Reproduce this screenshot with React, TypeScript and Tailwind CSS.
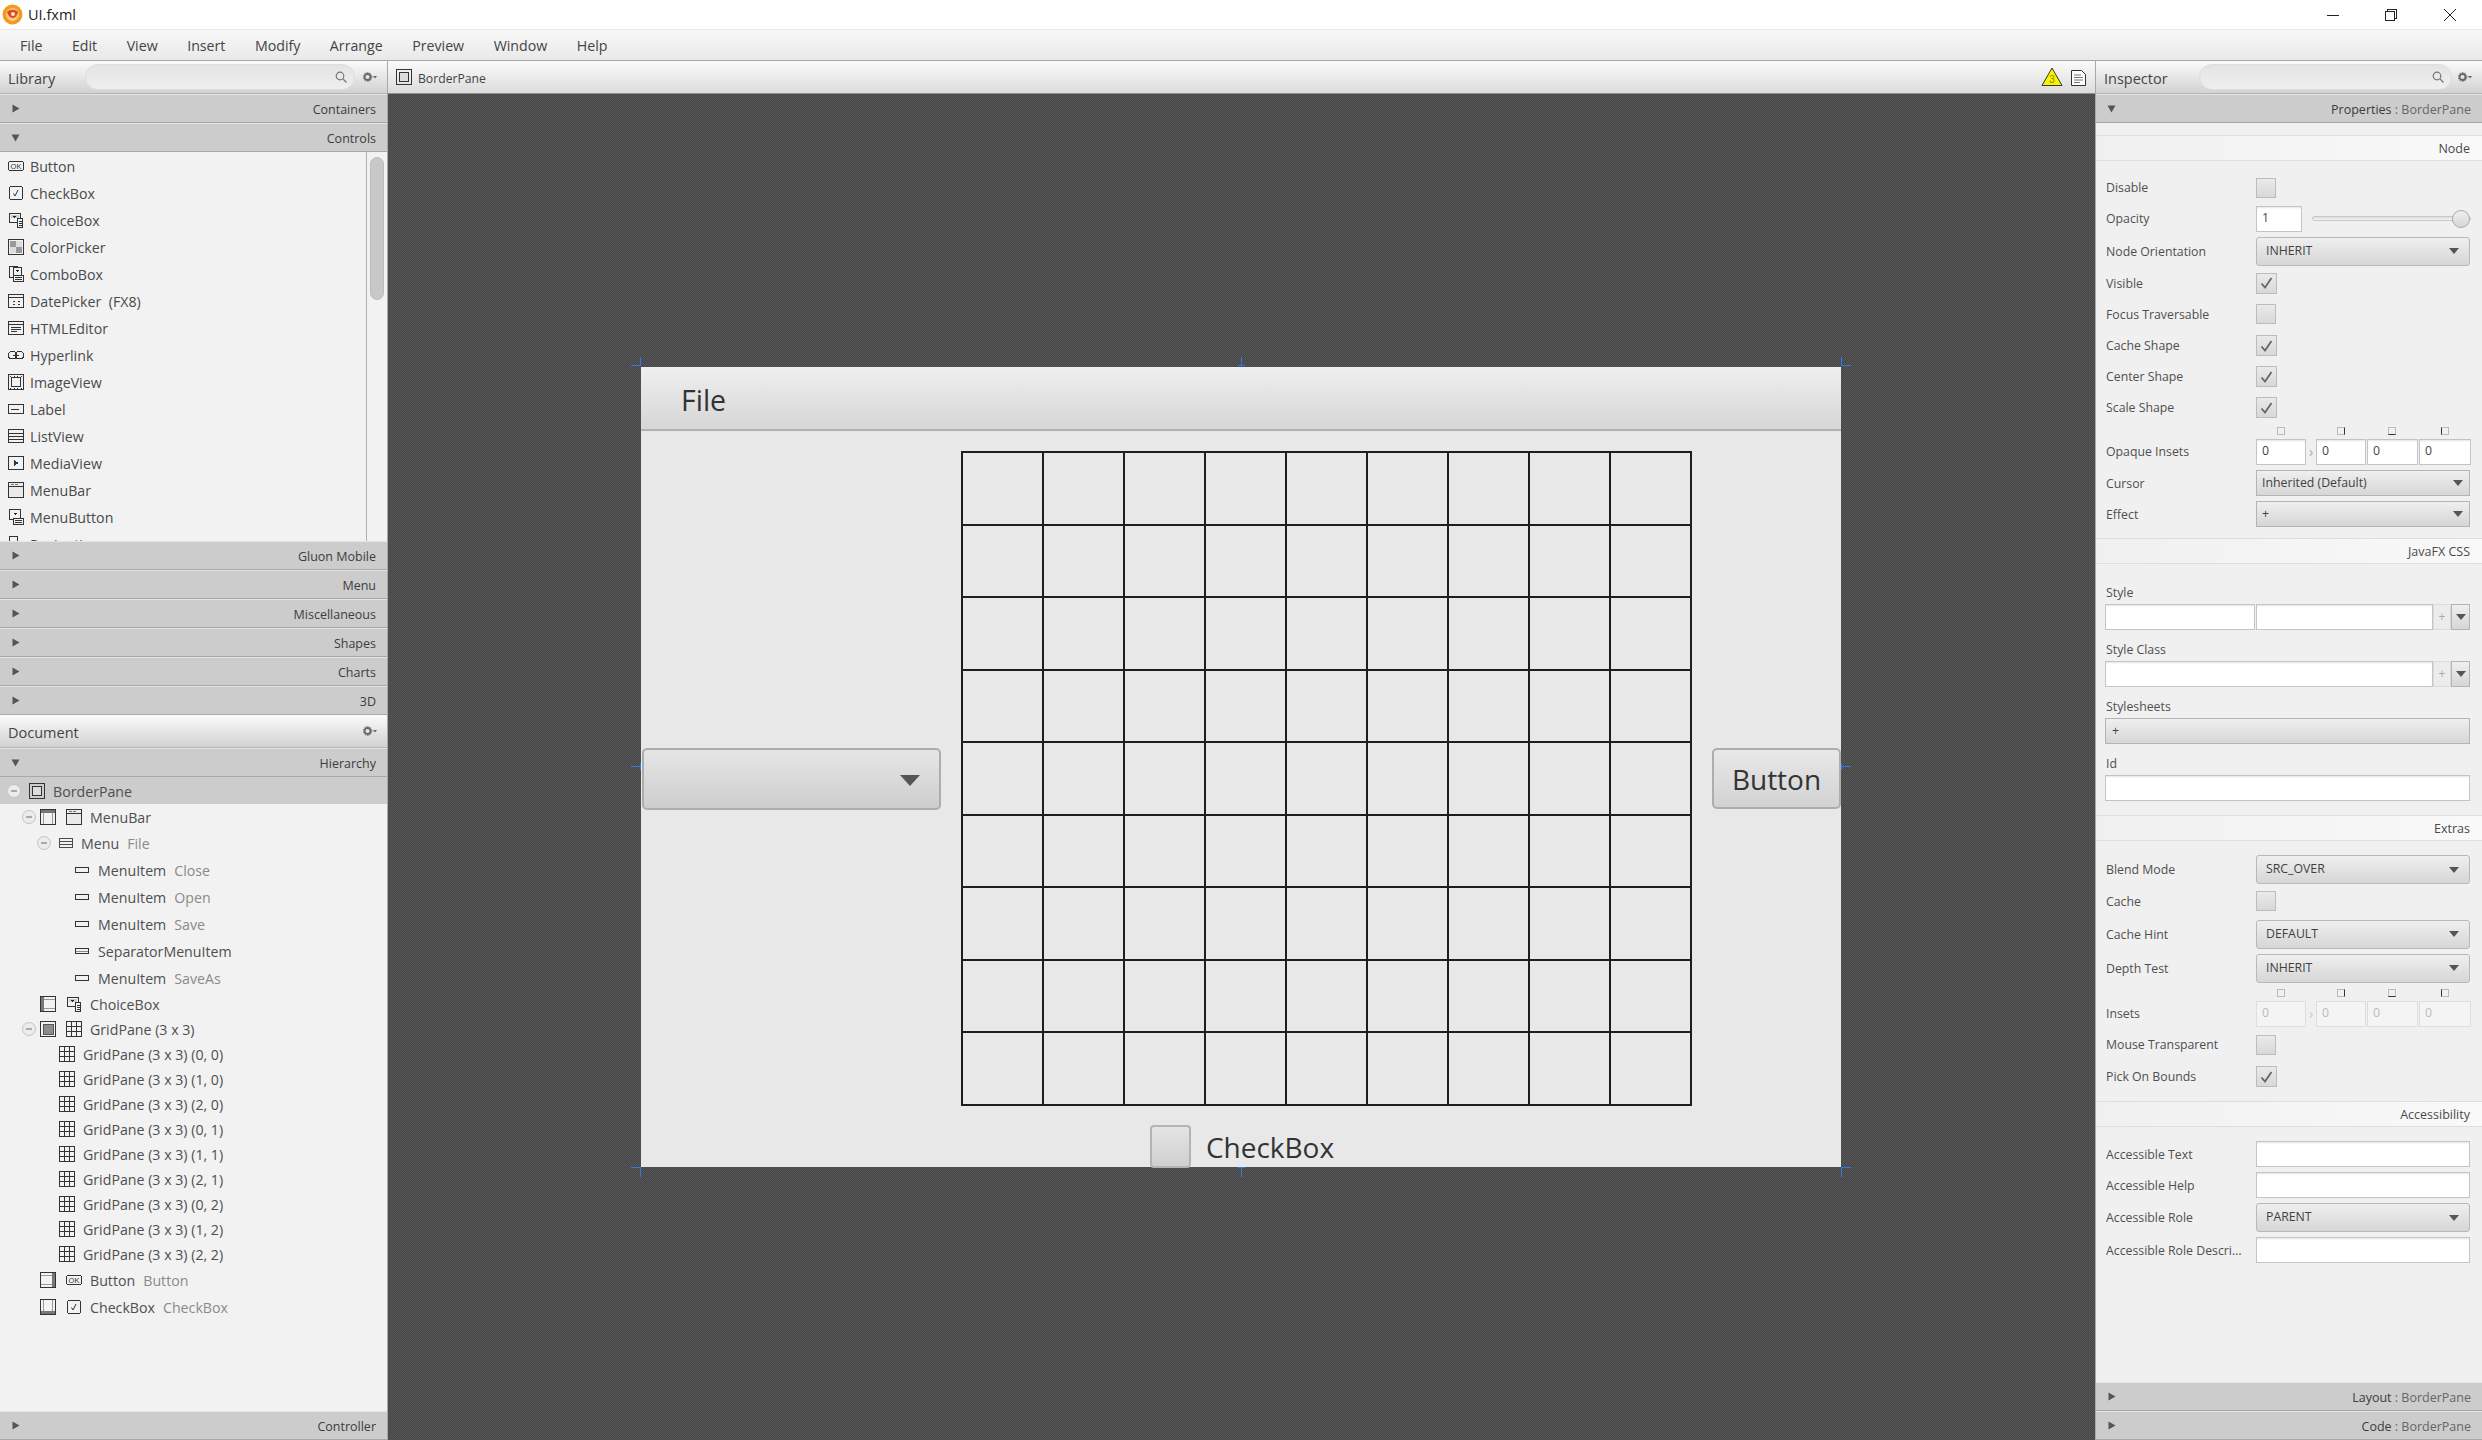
import type { ReactNode } from "react";

const stroke = "#333";

function Svg({ children, size = 16 }: { children: ReactNode; size?: number }) {
  return (
    <svg width={size} height={size} viewBox="0 0 16 16" fill="none" stroke={stroke} strokeWidth="1" shapeRendering="crispEdges" className="shrink-0">
      {children}
    </svg>
  );
}

function Icon({ name }: { name: string }) {
  switch (name) {
    case "button":
      return (
        <Svg>
          <rect x="0.5" y="3.5" width="15" height="9" rx="2" />
          <text x="8" y="11" fontSize="7.5" textAnchor="middle" fill={stroke} stroke="none" fontFamily="Liberation Sans">OK</text>
        </Svg>
      );
    case "check":
      return (
        <Svg>
          <rect x="1.5" y="1.5" width="13" height="13" rx="2" />
          <path d="M5.5 8.5l1.5 2.5 3-6" shapeRendering="auto" />
        </Svg>
      );
    case "choice":
      return (
        <Svg>
          <rect x="1.5" y="1.5" width="11" height="9" fill="#f2f2f2" />
          <rect x="3" y="3" width="8" height="3" fill="#ccc" stroke="none" />
          <path d="M5 4h3l-1.500 2z" fill="#222" stroke="none" />
          <rect x="9.500" y="6.500" width="5" height="9" fill="#f2f2f2" />
          <path d="M10.500 9.500h3M10.500 11.500h3M10.500 13.500h3" />
        </Svg>
      );
    case "color":
      return (
        <Svg>
          <rect x="0.5" y="0.5" width="15" height="15" />
          <rect x="2" y="2" width="6" height="6" fill="#999" stroke="none" />
          <rect x="8" y="2" width="6" height="6" fill="#ddd" stroke="none" />
          <rect x="2" y="8" width="6" height="6" fill="#ddd" stroke="none" />
          <rect x="8" y="8" width="6" height="6" fill="#999" stroke="none" />
        </Svg>
      );
    case "combo":
      return (
        <Svg>
          <rect x="1.500" y="0.500" width="8" height="11" fill="#f2f2f2" />
          <rect x="5.500" y="1.500" width="8" height="8" fill="#f2f2f2" />
          <path d="M8 4h3.500l-1.750 2z" fill="#222" stroke="none" />
          <rect x="5.500" y="9.500" width="10" height="6" fill="#f2f2f2" />
          <path d="M7 11.500h7M7 13.500h7" />
        </Svg>
      );
    case "date":
      return (
        <Svg>
          <rect x="0.500" y="1.500" width="15" height="13" />
          <path d="M1 4.500h14M4.500 8.500h2M9.500 8.500h2M4.500 11.500h2M9.500 11.500h2" />
        </Svg>
      );
    case "html":
      return (
        <Svg>
          <rect x="0.500" y="1.500" width="15" height="13" />
          <path d="M1 4.500h14M3 7.500h10M3 9.500h10M3 11.500h6" />
        </Svg>
      );
    case "link":
      return (
        <Svg>
          <rect x="0.500" y="4.500" width="8" height="7" rx="3" />
          <rect x="7.500" y="4.500" width="8" height="7" rx="3" />
          <path d="M5 8h6" />
        </Svg>
      );
    case "image":
      return (
        <Svg>
          <rect x="0.500" y="0.500" width="15" height="15" />
          <rect x="3.500" y="3.500" width="9" height="9" />
          <path d="M2 2h1M6 2h1M9 2h1M13 2h1M2 14h1M6 14h1M9 14h1M13 14h1" />
        </Svg>
      );
    case "label":
      return (
        <Svg>
          <rect x="0.500" y="3.500" width="15" height="9" />
          <path d="M3 8.500h8" />
        </Svg>
      );
    case "list":
      return (
        <Svg>
          <rect x="0.500" y="1.500" width="15" height="13" />
          <path d="M1 5.500h14M1 8.500h14M1 11.500h14" />
        </Svg>
      );
    case "media":
      return (
        <Svg>
          <rect x="0.500" y="1.500" width="15" height="13" />
          <path d="M6 5l5 3-5 3z" fill="#333" stroke="none" />
        </Svg>
      );
    case "menubar":
      return (
        <Svg>
          <rect x="0.500" y="0.500" width="15" height="15" fill="#eaeaea" />
          <path d="M1 4.500h14" />
          <path d="M2.500 2.500h3M7 2.500h3" stroke="#777" />
        </Svg>
      );
    case "menubutton":
      return (
        <Svg>
          <rect x="1.500" y="0.500" width="11" height="10" rx="1" fill="#f2f2f2" />
          <path d="M5 4h4l-2 2z" fill="#222" stroke="none" />
          <rect x="5.500" y="9.500" width="10" height="6" fill="#f2f2f2" />
          <path d="M7 11.500h7M7 13.500h7" />
        </Svg>
      );
    case "pagination":
      return (
        <Svg>
          <rect x="1.500" y="0.500" width="8" height="10" fill="#f2f2f2" />
          <rect x="5.500" y="5.500" width="9" height="10" fill="#f2f2f2" />
        </Svg>
      );
    case "menu":
      return (
        <Svg size={14}>
          <rect x="0.500" y="2.500" width="15" height="11" />
          <path d="M1 6.500h14M1 9.500h14" />
        </Svg>
      );
    case "menuitem":
      return (
        <Svg>
          <rect x="1.500" y="5.500" width="13" height="5" />
        </Svg>
      );
    case "separator":
      return (
        <Svg>
          <rect x="1.500" y="5.500" width="13" height="5" />
          <path d="M2 8h12" stroke="#888" />
        </Svg>
      );
    case "grid":
      return (
        <Svg>
          <rect x="0.500" y="0.500" width="15" height="15" />
          <path d="M5.500 1v14M10.500 1v14M1 5.500h14M1 10.500h14" />
        </Svg>
      );
    case "pane":
      return (
        <Svg>
          <rect x="0.500" y="0.500" width="15" height="15" />
          <rect x="3.500" y="3.500" width="9" height="9" fill="#ddd" />
        </Svg>
      );
    case "top":
      return (
        <Svg>
          <rect x="0.500" y="0.500" width="15" height="15" />
          <rect x="1" y="1" width="14" height="3" fill="#777" stroke="none" />
          <path d="M3.500 4v11M12.500 4v11" stroke="#999" />
        </Svg>
      );
    case "left":
      return (
        <Svg>
          <rect x="0.500" y="0.500" width="15" height="15" />
          <rect x="1" y="1" width="3" height="14" fill="#777" stroke="none" />
          <path d="M4 3.500h11M4 12.500h11" stroke="#999" />
        </Svg>
      );
    case "center":
      return (
        <Svg>
          <rect x="0.500" y="0.500" width="15" height="15" />
          <rect x="3" y="3" width="10" height="10" fill="#8c8c8c" stroke="#555" />
        </Svg>
      );
    case "right":
      return (
        <Svg>
          <rect x="0.500" y="0.500" width="15" height="15" />
          <rect x="12" y="1" width="3" height="14" fill="#777" stroke="none" />
          <path d="M1 3.500h11M1 12.500h11" stroke="#999" />
        </Svg>
      );
    case "bottom":
      return (
        <Svg>
          <rect x="0.500" y="0.500" width="15" height="15" />
          <rect x="1" y="12" width="14" height="3" fill="#777" stroke="none" />
          <path d="M3.500 1v11M12.500 1v11" stroke="#999" />
        </Svg>
      );
    default:
      return null;
  }
}

function Arrow({ open }: { open?: boolean }) {
  return (
    <svg width="9" height="9" viewBox="0 0 9 9" className="shrink-0" fill="#555">
      {open ? <path d="M0.500 1.500h8l-4 7z" /> : <path d="M1.500 0.500l7 4-7 4z" />}
    </svg>
  );
}

function Bar({ label, sub, open }: { label: string; sub?: string; open?: boolean }) {
  return (
    <div className="h-[29px] shrink-0 flex items-center justify-between pl-[11px] pr-[11px] bg-[#cccccc] border-t border-t-[#e4e4e4] border-b border-b-[#a8a8a8] text-[12.500px] text-[#3c3c3c]">
      <Arrow open={open} />
      <span className="pt-[3px]">
        {label}
        {sub && <span className="text-[#666]"> : {sub}</span>}
      </span>
    </div>
  );
}

function Gear() {
  return (
    <svg width="14" height="10" viewBox="0 0 14 10" className="shrink-0">
      <circle cx="4.500" cy="5" r="3" fill="none" stroke="#666" strokeWidth="1.800" />
      <circle cx="4.500" cy="5" r="4.400" fill="none" stroke="#666" strokeWidth="1" strokeDasharray="1.500 1.300" />
      <path d="M10 4h4l-2 2.500z" fill="#666" />
    </svg>
  );
}

function Search({ className }: { className: string }) {
  return (
    <div className={`h-[26px] rounded-full border border-[#dedede] bg-gradient-to-b from-[#e4e4e4] to-[#efefef] flex items-center justify-end pr-[7px] ${className}`}>
      <svg width="12" height="12" viewBox="0 0 12 12" fill="none" stroke="#777" strokeWidth="1.200">
        <circle cx="5" cy="5" r="3.800" />
        <path d="M8 8l3.500 3.500" />
      </svg>
    </div>
  );
}

function PanelHeader({ title, children }: { title: string; children?: ReactNode }) {
  return (
    <div className="h-[33px] shrink-0 flex items-center pl-[8px] pr-[10px] bg-gradient-to-b from-[#fbfbfb] to-[#d2d2d2] border-b border-b-[#b4b4b4] text-[14.500px] text-[#444]">
      <span className="pt-[3px]">{title}</span>
      {children}
    </div>
  );
}

const libraryItems = [
  ["button", "Button"],
  ["check", "CheckBox"],
  ["choice", "ChoiceBox"],
  ["color", "ColorPicker"],
  ["combo", "ComboBox"],
  ["date", "DatePicker  (FX8)"],
  ["html", "HTMLEditor"],
  ["link", "Hyperlink"],
  ["image", "ImageView"],
  ["label", "Label"],
  ["list", "ListView"],
  ["media", "MediaView"],
  ["menubar", "MenuBar"],
  ["menubutton", "MenuButton"],
  ["pagination", "Pagination"],
];

type TreeRow = {
  h: string;
  pl: string;
  toggle?: boolean;
  pos?: string;
  icon: string;
  label: string;
  value?: string;
  selected?: boolean;
};

const menuItemRow = (value: string): TreeRow => ({ h: "h-[27px]", pl: "pl-[74px]", icon: "menuitem", label: "MenuItem", value });
const gridRow = (cell: string): TreeRow => ({ h: "h-[25px]", pl: "pl-[59px]", icon: "grid", label: `GridPane (3 x 3) (${cell})` });

const treeRows: TreeRow[] = [
  { h: "h-[27px]", pl: "pl-[7px]", toggle: true, icon: "pane", label: "BorderPane", selected: true },
  { h: "h-[25px]", pl: "pl-[22px]", toggle: true, pos: "top", icon: "menubar", label: "MenuBar" },
  { h: "h-[27px]", pl: "pl-[37px]", toggle: true, icon: "menu", label: "Menu", value: "File" },
  menuItemRow("Close"),
  menuItemRow("Open"),
  menuItemRow("Save"),
  { h: "h-[27px]", pl: "pl-[74px]", icon: "separator", label: "SeparatorMenuItem" },
  menuItemRow("SaveAs"),
  { h: "h-[25px]", pl: "pl-[40px]", pos: "left", icon: "choice", label: "ChoiceBox" },
  { h: "h-[25px]", pl: "pl-[22px]", toggle: true, pos: "center", icon: "grid", label: "GridPane (3 x 3)" },
  gridRow("0, 0"),
  gridRow("1, 0"),
  gridRow("2, 0"),
  gridRow("0, 1"),
  gridRow("1, 1"),
  gridRow("2, 1"),
  gridRow("0, 2"),
  gridRow("1, 2"),
  gridRow("2, 2"),
  { h: "h-[27px]", pl: "pl-[40px]", pos: "right", icon: "button", label: "Button", value: "Button" },
  { h: "h-[27px]", pl: "pl-[40px]", pos: "bottom", icon: "check", label: "CheckBox", value: "CheckBox" },
];

function Toggle() {
  return (
    <span className="w-[14px] h-[14px] rounded-full border border-[#c4c4c4] bg-[#ececec] flex items-center justify-center shrink-0">
      <span className="w-[6px] h-[2px] bg-[#aaa]" />
    </span>
  );
}

function LeftPanel() {
  return (
    <div className="w-[387px] shrink-0 flex flex-col bg-[#f2f2f2]">
      <PanelHeader title="Library">
        <Search className="w-[270px] ml-[30px]" />
        <span className="ml-auto">
          <Gear />
        </span>
      </PanelHeader>
      <Bar label="Containers" />
      <Bar label="Controls" open />
      <div className="h-[389px] shrink-0 relative overflow-hidden border-r-0">
        <div className="w-[367px] h-full border-r border-r-[#b0b0b0] overflow-hidden">
          {libraryItems.map(([icon, label]) => (
            <div key={label} className="h-[27px] pl-[8px] flex items-center gap-[6px] text-[14.200px] text-[#4a4a4a] whitespace-pre">
              <Icon name={icon} />
              <span className="pt-[2px]">{label}</span>
            </div>
          ))}
        </div>
        <div className="absolute left-[370px] top-[5px] w-[14px] h-[143px] rounded-full bg-[#c8c8c8] border border-[#bdbdbd]" />
      </div>
      <Bar label="Gluon Mobile" />
      <Bar label="Menu" />
      <Bar label="Miscellaneous" />
      <Bar label="Shapes" />
      <Bar label="Charts" />
      <Bar label="3D" />
      <PanelHeader title="Document">
        <span className="ml-auto">
          <Gear />
        </span>
      </PanelHeader>
      <Bar label="Hierarchy" open />
      <div className="flex-1 overflow-hidden">
        {treeRows.map((row, i) => (
          <div key={i} className={`${row.h} ${row.pl} flex items-center text-[14.200px] text-[#4f4f4f] whitespace-pre ${row.selected ? "bg-[#cccccc]" : ""}`}>
            {row.toggle && <span className={row.pos ? "mr-[4px]" : "mr-[8px]"}><Toggle /></span>}
            {row.pos && (
              <span className="mr-[10px]">
                <Icon name={row.pos} />
              </span>
            )}
            <span className="mr-[8px]">
              <Icon name={row.icon} />
            </span>
            <span className="pt-[3px]">{row.label}</span>
            {row.value && <span className="pt-[3px] ml-[8px] text-[#8a8a8a]">{row.value}</span>}
          </div>
        ))}
      </div>
      <Bar label="Controller" />
    </div>
  );
}

function Handles() {
  return (
    <svg width="1224" height="824" viewBox="-12 -12 1224 824" fill="none" stroke="#2f78e8" strokeWidth="1" shapeRendering="crispEdges" className="absolute -left-[12px] -top-[12px] pointer-events-none">
      <path d="M-10 -1.500H-0.500V-10" />
      <path d="M600.500 -10V-1.500M597 -1.500H604" />
      <path d="M1200.500 -10V-1.500H1210" />
      <path d="M-10 399.500H-0.500M-0.500 396V403" />
      <path d="M1200.500 396V403M1200.500 399.500H1210" />
      <path d="M-10 800.500H-0.500V810" />
      <path d="M600.500 800.500V810M597 800.500H604" />
      <path d="M1200.500 810V800.500H1210" />
    </svg>
  );
}

const gridCells = Array.from({ length: 81 }, (_, i) => i);

function Canvas() {
  return (
    <div className="relative w-[1200px] h-[800px] bg-[#e8e8e8] flex flex-col font-['Open_Sans',sans-serif]">
      <Handles />
      <div className="h-[64px] shrink-0 flex items-center pl-[40px] pt-[5px] bg-gradient-to-b from-[#efefef] to-[#d6d6d6] border-b-2 border-b-[#b0b0b0] text-[28.500px] text-[#333]">
        File
      </div>
      <div className="flex-1 flex items-center gap-[20px] pl-[1px]">
        <div className="w-[299px] h-[62px] rounded-[5px] border-2 border-[#adadad] bg-gradient-to-b from-[#e6e6e6] to-[#cdcdcd] flex items-center justify-end pr-[19px]">
          <svg width="20" height="12" viewBox="0 0 20 12" fill="#555" className="mt-[4px]">
            <path d="M0 0h20L10 11z" />
          </svg>
        </div>
        <div className="w-[731px] h-[655px] grid grid-cols-9 grid-rows-9 gap-[2px] p-[2px] bg-[#1e1e1e]">
          {gridCells.map((c) => (
            <div key={c} className="bg-[#e8e8e8]" />
          ))}
        </div>
        <div className="w-[129px] h-[61px] rounded-[5px] border-2 border-[#adadad] bg-gradient-to-b from-[#e8e8e8] to-[#d2d2d2] flex items-center justify-center text-[28px] text-[#333]">
          Button
        </div>
      </div>
      <div className="h-[41px] shrink-0 flex items-center justify-center gap-[15px] pl-[2px]">
        <div className="w-[41px] h-[43px] rounded-[4px] border-2 border-[#b4b4b4] bg-gradient-to-b from-[#e4e4e4] to-[#d0d0d0]" />
        <span className="text-[28px] text-[#333]">CheckBox</span>
      </div>
    </div>
  );
}

function CenterPanel() {
  return (
    <div className="flex-1 min-w-0 flex flex-col border-l border-l-[#a8a8a8]">
      <div className="h-[33px] shrink-0 flex items-center pl-[8px] pr-[8px] gap-[6px] bg-gradient-to-b from-[#fbfbfb] to-[#dcdcdc] border-b border-b-[#8e8e8e] text-[12.200px] text-[#444]">
        <Icon name="pane" />
        <span className="pt-[4px]">BorderPane</span>
        <svg width="22" height="20" viewBox="0 0 22 20" className="ml-auto">
          <path d="M11 1L21 18.500H1z" fill="#f6f600" stroke="#333" strokeWidth="1" />
          <text x="11" y="16" fontSize="10" textAnchor="middle" fill="#a07a00" fontFamily="Liberation Sans">3</text>
        </svg>
        <svg width="15" height="17" viewBox="0 0 15 17" className="ml-[2px] mr-[1px]" fill="none" stroke="#333">
          <path d="M0.500 1.500H10.500L14.500 5.500V16.500H0.500z" fill="#fff" />
          <path d="M3 6h7M3 8.500h9M3 11h9M3 13.500h6" stroke="#777" />
        </svg>
      </div>
      <div className="flex-1 flex items-center justify-center pr-px bg-[repeating-conic-gradient(#474747_0_25%,#565656_0_50%)] bg-[length:2px_2px]">
        <Canvas />
      </div>
    </div>
  );
}

function Section({ title, className = "" }: { title: string; className?: string }) {
  return (
    <div className={`h-[26px] shrink-0 flex items-center justify-end pr-[12px] border-t border-b border-[#dedede] bg-gradient-to-r from-[#f0f0f0] to-[#f9f9f9] text-[12.500px] text-[#4a4a4a] ${className}`}>
      <span className="pt-[2px]">{title}</span>
    </div>
  );
}

function Check({ checked }: { checked?: boolean }) {
  return (
    <div className={`${checked ? "w-[21px] h-[21px]" : "w-[20px] h-[20px]"} border border-[#bcbcbc] bg-gradient-to-b from-[#eaeaea] to-[#d8d8d8] flex items-center justify-center`}>
      {checked && (
        <svg width="13" height="12" viewBox="0 0 13 12" fill="none" stroke="#666" strokeWidth="1.800">
          <path d="M1.500 6.500L5 10.500 11.500 1" />
        </svg>
      )}
    </div>
  );
}

function Combo({ text, rounded, className = "w-[214px]" }: { text: string; rounded?: boolean; className?: string }) {
  return (
    <div className={`${className} flex items-center justify-between border bg-gradient-to-b from-[#efefef] to-[#d6d6d6] text-[12.300px] text-[#3f3f3f] ${rounded ? "h-[29px] rounded-[3px] border-[#b8b8b8] pl-[9px] pr-[10px]" : "h-[26px] border-[#b4b4b4] pl-[5px] pr-[6px]"}`}>
      <span>{text}</span>
      <svg width="10" height="6" viewBox="0 0 10 6" fill="#555">
        <path d="M0 0h10L5 6z" />
      </svg>
    </div>
  );
}

function Input({ className, text, disabled }: { className: string; text?: string; disabled?: boolean }) {
  return (
    <div className={`${className} h-[26px] border flex items-center pl-[5px] text-[12.300px] ${disabled ? "bg-[#f4f4f4] border-[#dedede] text-[#bbb]" : "bg-white border-[#c4c4c4] text-[#444] shadow-[inset_0_2px_2px_-1px_#e4e4e4]"}`}>
      {text}
    </div>
  );
}

function Row({ label, h, children }: { label?: string; h: string; children?: ReactNode }) {
  return (
    <div className={`${h} shrink-0 flex items-center pl-[10px] text-[12.300px] text-[#4f4f4f]`}>
      <span className="w-[150px] shrink-0 truncate pr-[12px] pt-[2px]">{label}</span>
      {children}
    </div>
  );
}

function InsetIcons() {
  const sides = ["border-t-[#bbb]", "border-r-[#333]", "border-b-[#333]", "border-l-[#333]"];
  return (
    <div className="h-[15px] shrink-0 pl-[160px] flex items-center">
      <div className="w-[214px] flex items-center">
        {sides.map((side, i) => (
          <div key={side} className={`${["w-[50px] ml-0", "w-[50px] ml-[10px]", "w-[51px] ml-px", "w-[51px] ml-[2px]"][i]} flex justify-center`}>
            <span className={`w-[8px] h-[8px] border border-[#bbb] ${side}`} />
          </div>
        ))}
      </div>
    </div>
  );
}

function Insets({ disabled }: { disabled?: boolean }) {
  return (
    <div className="flex items-center">
      <Input className="w-[50px]" text="0" disabled={disabled} />
      <span className={`w-[10px] text-center text-[14px] ${disabled ? "text-[#ccc]" : "text-[#aaa]"}`}>›</span>
      <Input className="w-[50px]" text="0" disabled={disabled} />
      <Input className="w-[51px] ml-px" text="0" disabled={disabled} />
      <Input className="w-[52px] ml-px" text="0" disabled={disabled} />
    </div>
  );
}

function Label({ text, h }: { text: string; h: string }) {
  return <div className={`${h} shrink-0 flex items-end pb-[2px] pl-[10px] text-[12.300px] text-[#4f4f4f]`}>{text}</div>;
}

function AddCombo() {
  return (
    <>
      <div className="w-[18px] h-[26px] border border-[#dcdcdc] bg-[#ececec] text-[#aaa] text-[12px] flex items-center justify-center">+</div>
      <div className="w-[19px] h-[26px] border border-[#b4b4b4] bg-gradient-to-b from-[#efefef] to-[#d6d6d6] flex items-center justify-center">
        <svg width="10" height="6" viewBox="0 0 10 6" fill="#555">
          <path d="M0 0h10L5 6z" />
        </svg>
      </div>
    </>
  );
}

function RightPanel() {
  return (
    <div className="w-[387px] shrink-0 flex flex-col bg-[#f0f0f0] border-l border-l-[#a8a8a8]">
      <PanelHeader title="Inspector">
        <Search className="w-[253px] ml-[31px]" />
        <span className="ml-auto">
          <Gear />
        </span>
      </PanelHeader>
      <Bar label="Properties" sub="BorderPane" open />
      <div className="h-[12px] shrink-0" />
      <Section title="Node" />
      <div className="h-[11px] shrink-0" />
      <Row label="Disable" h="h-[31px]"><Check /></Row>
      <Row label="Opacity" h="h-[31px]">
        <Input className="w-[46px]" text="1" />
        <div className="relative ml-[10px] w-[159px] h-[5px] rounded-full border border-[#c8c8c8] bg-gradient-to-b from-[#dcdcdc] to-[#f4f4f4]">
          <div className="absolute right-0 -top-[7px] w-[18px] h-[18px] rounded-full border border-[#aaa] bg-gradient-to-b from-[#efefef] to-[#d6d6d6]" />
        </div>
      </Row>
      <Row label="Node Orientation" h="h-[34px]"><Combo text="INHERIT" rounded /></Row>
      <Row label="Visible" h="h-[30px]"><Check checked /></Row>
      <Row label="Focus Traversable" h="h-[32px]"><Check /></Row>
      <Row label="Cache Shape" h="h-[31px]"><Check checked /></Row>
      <Row label="Center Shape" h="h-[31px]"><Check checked /></Row>
      <Row label="Scale Shape" h="h-[31px]"><Check checked /></Row>
      <InsetIcons />
      <Row label="Opaque Insets" h="h-[27px]"><Insets /></Row>
      <Row label="Cursor" h="h-[36px]"><Combo text="Inherited (Default)" /></Row>
      <Row label="Effect" h="h-[26px]"><Combo text="+" /></Row>
      <div className="h-[11px] shrink-0" />
      <Section title="JavaFX CSS" />
      <Label text="Style" h="h-[40px]" />
      <div className="h-[26px] shrink-0 flex pl-[9px]">
        <Input className="w-[150px]" />
        <Input className="w-[177px] ml-px" />
        <AddCombo />
      </div>
      <Label text="Style Class" h="h-[31px]" />
      <div className="h-[26px] shrink-0 flex pl-[9px]">
        <Input className="w-[328px]" />
        <AddCombo />
      </div>
      <Label text="Stylesheets" h="h-[31px]" />
      <div className="h-[26px] shrink-0 pl-[9px]">
        <div className="w-[365px] h-[26px] border border-[#b4b4b4] bg-gradient-to-b from-[#efefef] to-[#d6d6d6] flex items-center pl-[6px] text-[12.500px] text-[#444]">+</div>
      </div>
      <Label text="Id" h="h-[31px]" />
      <div className="h-[26px] shrink-0 pl-[9px]">
        <Input className="w-[365px]" />
      </div>
      <div className="h-[14px] shrink-0" />
      <Section title="Extras" />
      <div className="h-[13px] shrink-0" />
      <Row label="Blend Mode" h="h-[31px]"><Combo text="SRC_OVER" rounded /></Row>
      <Row label="Cache" h="h-[32px]"><Check /></Row>
      <Row label="Cache Hint" h="h-[34px]"><Combo text="DEFAULT" rounded /></Row>
      <Row label="Depth Test" h="h-[34px]"><Combo text="INHERIT" rounded /></Row>
      <InsetIcons />
      <Row label="Insets" h="h-[27px]"><Insets disabled /></Row>
      <Row label="Mouse Transparent" h="h-[35px]"><Check /></Row>
      <Row label="Pick On Bounds" h="h-[29px]"><Check checked /></Row>
      <div className="h-[10px] shrink-0" />
      <Section title="Accessibility" />
      <div className="h-[14px] shrink-0" />
      <Row label="Accessible Text" h="h-[26px]"><Input className="w-[214px]" /></Row>
      <div className="h-[5px] shrink-0" />
      <Row label="Accessible Help" h="h-[26px]"><Input className="w-[214px]" /></Row>
      <div className="h-[5px] shrink-0" />
      <Row label="Accessible Role" h="h-[29px]"><Combo text="PARENT" rounded /></Row>
      <div className="h-[5px] shrink-0" />
      <Row label="Accessible Role Description" h="h-[26px]"><Input className="w-[214px]" /></Row>
      <div className="flex-1" />
      <Bar label="Layout" sub="BorderPane" />
      <Bar label="Code" sub="BorderPane" />
    </div>
  );
}

const menus = ["File", "Edit", "View", "Insert", "Modify", "Arrange", "Preview", "Window", "Help"];

export default function App() {
  return (
    <div className="w-full h-screen overflow-hidden flex flex-col bg-white font-['Open_Sans',sans-serif]">
      <div className="h-[30px] shrink-0 flex items-center pl-[2px] bg-white border-b border-b-[#e8e8e8] text-[14.500px] text-[#222]">
        <svg width="21" height="21" viewBox="0 0 21 21" className="shrink-0">
          <circle cx="10.500" cy="10.500" r="10" fill="#f59a1c" />
          <circle cx="10.500" cy="10.500" r="6.500" fill="#f7c98a" />
          <path d="M5 8c3-3 8-3 11 0-1 4-3 6-5 6-3 0-5-3-6-6z" fill="#e0481f" />
          <circle cx="11" cy="10" r="2" fill="#fbe3c2" />
        </svg>
        <span className="ml-[5px]">UI.fxml</span>
        <div className="ml-auto flex items-center">
          <svg width="12" height="12" viewBox="0 0 12 12" stroke="#222" fill="none" shapeRendering="crispEdges" className="mr-[46px]">
            <path d="M0 6.500h12" />
          </svg>
          <svg width="12" height="12" viewBox="0 0 12 12" stroke="#222" fill="none" shapeRendering="crispEdges" className="mr-[47px]">
            <rect x="0.500" y="2.500" width="9" height="9" />
            <path d="M2.500 2.500V0.500H11.500V9.500H9.500" />
          </svg>
          <svg width="12" height="12" viewBox="0 0 12 12" stroke="#222" fill="none" className="mr-[26px]">
            <path d="M0 0l12 12M12 0L0 12" />
          </svg>
        </div>
      </div>
      <div className="h-[31px] shrink-0 flex items-center gap-[29.500px] pl-[20px] bg-gradient-to-b from-[#f8f8f8] to-[#e9e9e9] border-b border-b-[#a8a8a8] text-[14.200px] text-[#444]">
        {menus.map((m) => (
          <span key={m} className="pt-[2px]">{m}</span>
        ))}
      </div>
      <div className="flex-1 min-h-0 flex">
        <LeftPanel />
        <CenterPanel />
        <RightPanel />
      </div>
    </div>
  );
}
